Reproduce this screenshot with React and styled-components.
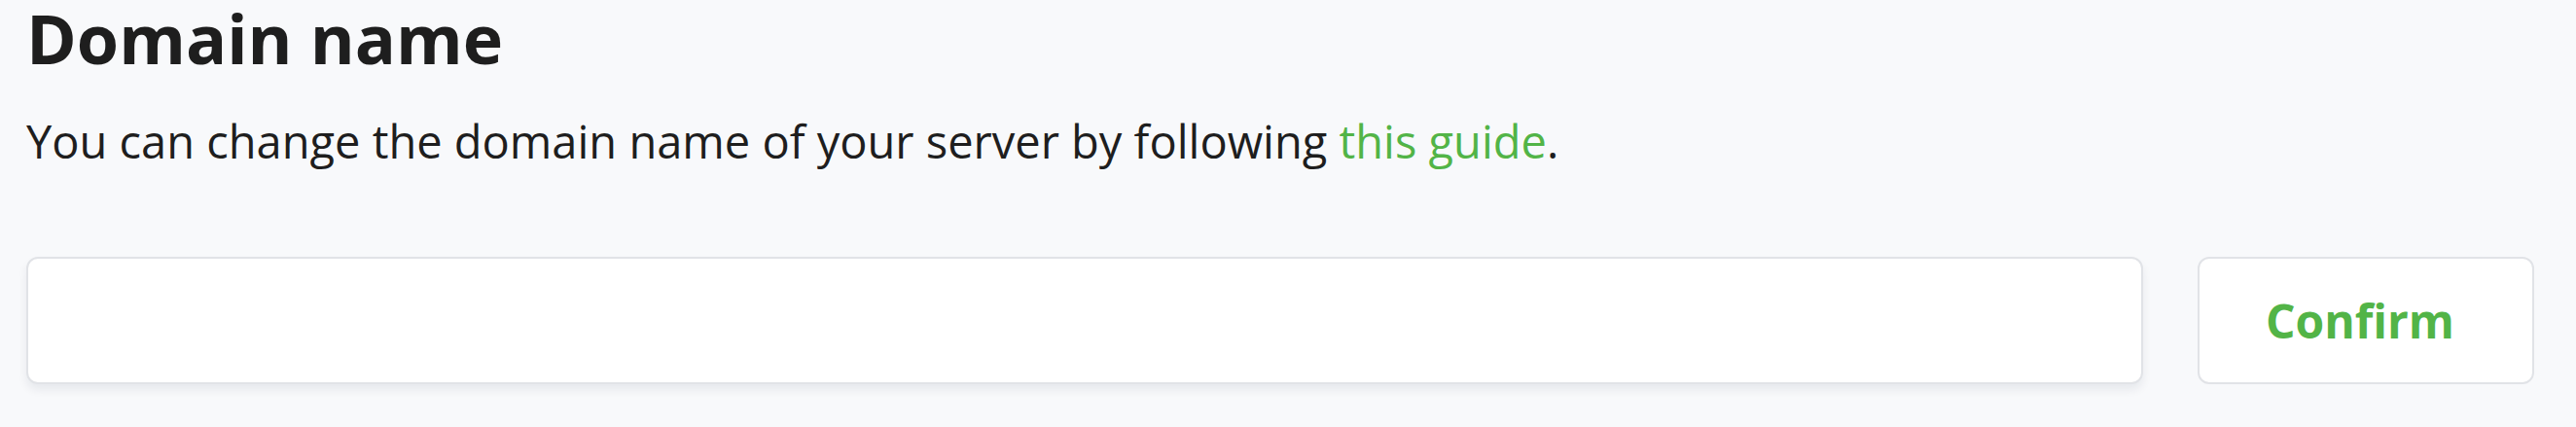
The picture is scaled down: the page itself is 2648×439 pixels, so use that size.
import React from "react";
import styled, { createGlobalStyle } from "styled-components";

const Global = createGlobalStyle`
  html, body {
    margin: 0;
    padding: 0;
    background: #f8f9fb;
  }
  body {
    font-family: "Open Sans", "Noto Sans", sans-serif;
    color: #1e1e1e;
  }
`;

const Page = styled.main`
  box-sizing: border-box;
  width: 2648px;
  height: 439px;
  padding: 0 43px 0 27px;
  background: #f8f9fb;
  display: flex;
  flex-direction: column;
`;

const Title = styled.h2`
  margin: 0;
  font-size: 70px;
  line-height: 78px;
  font-weight: 700;
  color: #1e1e1e;
`;

const Description = styled.p`
  margin: 39px 0 0;
  font-size: 47px;
  line-height: 56px;
  font-weight: 400;
  color: #1e1e1e;
`;

const Link = styled.a`
  color: #52b447;
  text-decoration: none;
`;

const FormRow = styled.form`
  margin-top: 91px;
  display: flex;
  gap: 56px;
  align-items: stretch;
`;

const TextInput = styled.input`
  flex: 1;
  box-sizing: border-box;
  height: 131px;
  border: 2px solid #e1e3e7;
  border-radius: 12px;
  background: #ffffff;
  box-shadow: 0 6px 10px rgba(20, 30, 50, 0.07);
  font-family: inherit;
  font-size: 46px;
  padding: 0 32px;
  outline: none;
`;

const Button = styled.button`
  box-sizing: border-box;
  width: 346px;
  height: 131px;
  padding: 0 12px 0 0;
  border: 2px solid #e1e3e7;
  border-radius: 12px;
  background: #ffffff;
  color: #52b447;
  font-family: inherit;
  font-size: 48px;
  font-weight: 700;
  cursor: pointer;
`;

export default function App() {
  return (
    <>
      <Global />
      <Page>
        <Title>Domain name</Title>
        <Description>
          You can change the domain name of your server by following{" "}
          <Link href="#">this guide</Link>.
        </Description>
        <FormRow onSubmit={(e) => e.preventDefault()}>
          <TextInput type="text" aria-label="Domain name" />
          <Button type="submit">Confirm</Button>
        </FormRow>
      </Page>
    </>
  );
}
